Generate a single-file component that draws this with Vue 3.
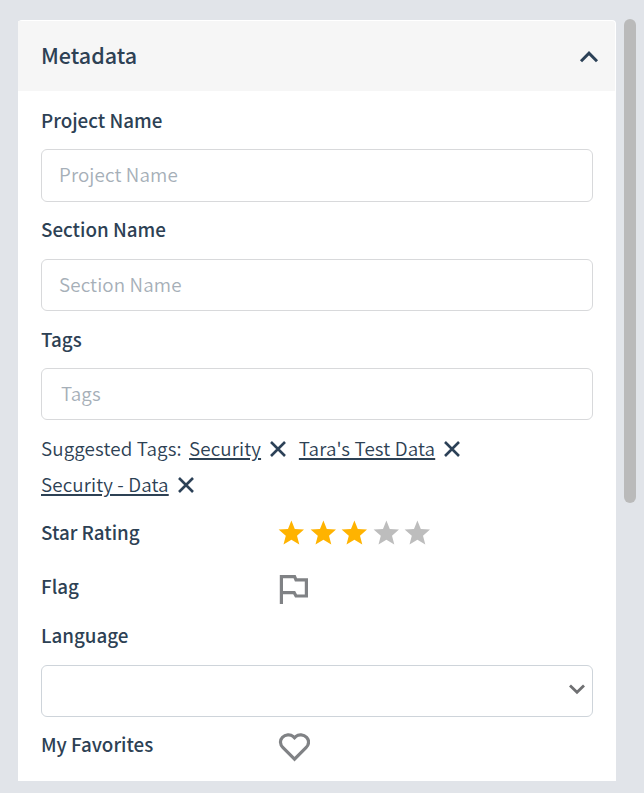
<script setup>
import { ref } from 'vue'

const fields = [
  { label: 'Project Name', kind: 'project' },
  { label: 'Section Name', kind: 'section' },
  { label: 'Tags', kind: 'tags' },
]
const suggested = ref([
  { text: 'Security', kind: 'security' },
  { text: "Tara's Test Data", kind: 'tara' },
  { text: 'Security - Data', kind: 'data' },
])
const rating = ref(3)
</script>

<template>
  <main class="page">
    <section class="card">
      <header class="head">
        <h2><span class="t">Metadata</span></h2>
        <svg class="chevron" width="20" height="14" viewBox="0 0 20 14"><path d="M2 11.2 10 3.2l8 8" /></svg>
      </header>
      <div class="body">
        <div v-for="f in fields" :key="f.kind" class="field" :class="f.kind">
          <label class="label"><span class="t">{{ f.label }}</span></label>
          <div class="input"><span class="t">{{ f.label }}</span></div>
        </div>
        <div class="suggested">
          <span class="lead t">Suggested Tags:</span>
          <span v-for="s in suggested" :key="s.kind" class="tag" :class="s.kind">
            <a class="t">{{ s.text }}</a>
            <svg width="16" height="16" viewBox="0 0 16 16"><path d="m1 1 14 14M15 1 1 15" /></svg>
          </span>
        </div>
        <div class="row stars-row">
          <span class="label"><span class="t">Star Rating</span></span>
          <div class="stars">
            <svg v-for="n in 5" :key="n" :class="{ on: n <= rating }" width="26" height="25" viewBox="0 0 26 25">
              <path d="M13.4 0.4 16.8 9.1 26 9.6 19 15.7 21.3 24.6 13.4 19.7 5.5 24.6 7.8 15.7 0.6 9.6 10 9.1Z" />
            </svg>
          </div>
        </div>
        <div class="row flag-row">
          <span class="label"><span class="t">Flag</span></span>
          <svg class="flag" width="30" height="30" viewBox="0 0 30 30">
            <path d="M2.4 30V2.7H15.6L17 5.9H27.4V22H17L15.2 18.7H2.4" />
          </svg>
        </div>
        <div class="label language"><span class="t">Language</span></div>
        <div class="select">
          <svg width="18" height="12" viewBox="0 0 18 12"><path d="M2 2.4 9 9.2l7-6.8" /></svg>
        </div>
        <div class="row favorite-row">
          <span class="label"><span class="t">My Favorites</span></span>
          <svg class="heart" width="32" height="29" viewBox="-0.5 0 32 29">
            <path d="M16 26.2 4.5 14.7C1.2 11.4 1.2 7 3.9 4.3 6.8 1.3 11.9 1 14.5 3.4L16 4.8l1.5-1.4c2.6-2.4 7.7-2.1 10.6.9 2.7 2.7 2.7 7.1-.6 10.4Z" />
          </svg>
        </div>
      </div>
    </section>
    <div class="scrollbar"></div>
  </main>
</template>

<style>
body {
  background: #e1e4e9;
}
</style>

<style scoped>
.page {
  box-sizing: border-box;
  height: 793px;
  padding: 20px 0 12px 18px;
  display: flex;
  align-items: flex-start;
  overflow: hidden;
  background: #e1e4e9;
  color: #2d4154;
  font-family: 'Noto Sans CJK SC', 'Noto Sans', sans-serif;
  font-size: 18.8px;
}
.card {
  box-sizing: border-box;
  width: 598px;
  height: 761px;
  padding-top: 1px;
  border-radius: 4px 4px 0 0;
  background: #fff;
}
.head {
  box-sizing: border-box;
  width: 597px;
  height: 70px;
  padding: 0 16px 0 23px;
  display: flex;
  align-items: center;
  justify-content: space-between;
  border-radius: 0 3px 0 0;
  background: #f6f6f6;
}
h2 {
  margin: 0 0 2px;
  font-size: 21.5px;
  font-weight: 500;
  line-height: 30px;
}
svg {
  display: block;
  flex: none;
  fill: none;
}
.chevron {
  margin-top: 1px;
  stroke: #2c4157;
  stroke-width: 3;
}
.body {
  padding: 0 23px;
}
.label {
  display: flex;
  align-items: center;
  font-weight: 500;
  line-height: 28px;
}
.field .label {
  box-sizing: border-box;
  height: 57px;
  padding-bottom: 2px;
}
.project .label {
  height: 58px;
  padding-bottom: 0;
}
.section .label {
  padding-bottom: 4px;
}
.input,
.select {
  box-sizing: border-box;
  height: 52px;
  padding: 0 17px 2px;
  display: flex;
  align-items: center;
  border: 1px solid #d8d9db;
  border-radius: 6px;
  color: #a6afb8;
  line-height: 28px;
  font-weight: 350;
  letter-spacing: 0.13px;
}
.project .input {
  height: 53px;
  padding-bottom: 4px;
}
.tags .input {
  padding-left: 19px;
}
.suggested {
  padding: 10px 0 1px;
  display: flex;
  flex-wrap: wrap;
  line-height: 36px;
  font-weight: 350;
  letter-spacing: 0.13px;
}
.lead {
  margin-right: 7.4px;
}
.tag {
  display: flex;
  align-items: center;
  gap: 9px;
  margin-right: 12.8px;
}
.tag a {
  text-decoration: underline;
  text-decoration-thickness: 2px;
  text-underline-offset: 2px;
}
.tag svg {
  margin-top: 2px;
  stroke: #2c4157;
  stroke-width: 2.6;
}
.t {
  white-space: nowrap;
}
.row {
  display: grid;
  grid-template-columns: 237px 1fr;
  align-items: center;
}
.row .label {
  margin-bottom: 2px;
}
.stars-row {
  height: 60px;
}
.flag-row {
  height: 48px;
}
.favorite-row {
  height: 56px;
}
.stars {
  display: flex;
  gap: 5.5px;
  margin-bottom: 1px;
  padding-left: 0.4px;
}
.stars svg {
  fill: #bdbdbd;
}
.stars svg.on {
  fill: #ffb300;
}
.flag,
.heart {
  stroke: #808285;
  stroke-width: 3.2;
}
.flag {
  margin: 4px 0 0 1.4px;
}
.heart {
  margin: 4px 0 0 0.4px;
}
.language {
  height: 48px;
  margin-bottom: 6px;
}
.select {
  padding-right: 6px;
  justify-content: flex-end;
  border-color: #ced4da;
}
.select svg {
  margin-bottom: 3px;
  stroke: #6f7072;
  stroke-width: 2.8;
}
.scrollbar {
  width: 12px;
  height: 484px;
  margin: -1px 0 0 8px;
  border-radius: 6px;
  background: #bababa;
}
</style>
